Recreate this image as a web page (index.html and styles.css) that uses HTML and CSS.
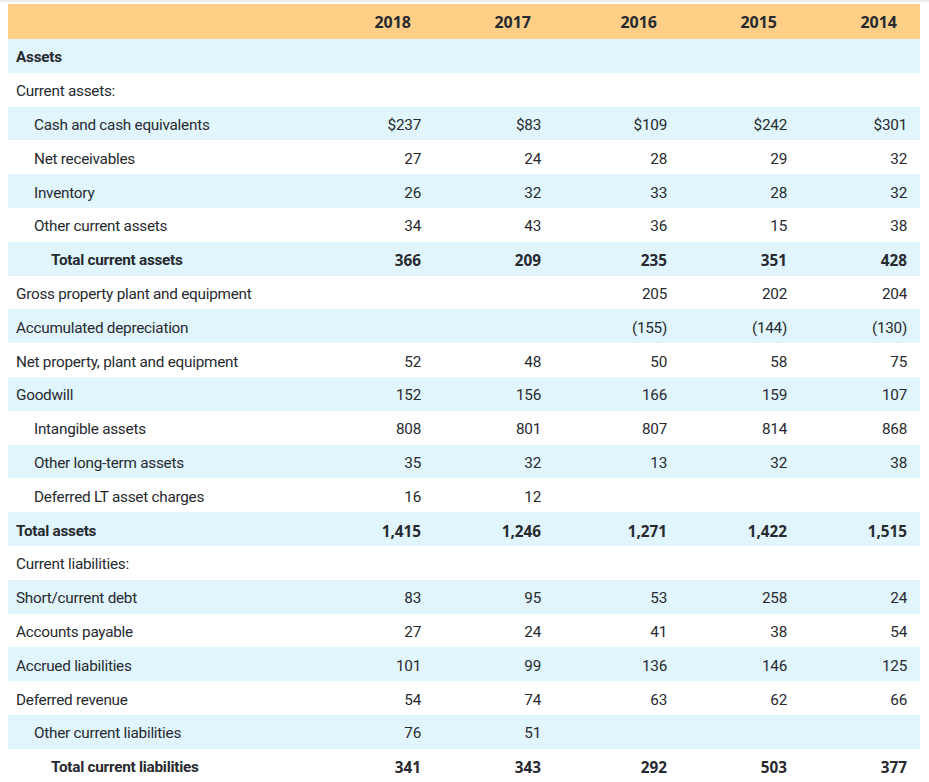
FILE: index.html
```html
<!DOCTYPE html>
<html>
<head>
<meta charset="utf-8">
<link rel="stylesheet" href="styles.css">
</head>
<body>
<table class="bs">
<colgroup>
<col class="c-lbl"><col class="c-std"><col class="c-std"><col class="c-wide"><col class="c-std"><col class="c-std">
</colgroup>
<thead>
<tr class="head"><th class="lbl"></th><th>2018</th><th>2017</th><th>2016</th><th>2015</th><th>2014</th></tr>
</thead>
<tbody>
<tr class="b"><td class="lbl bold">Assets</td><td></td><td></td><td></td><td></td><td></td></tr>
<tr><td class="lbl">Current assets:</td><td></td><td></td><td></td><td></td><td></td></tr>
<tr class="b"><td class="lbl i1">Cash and cash equivalents</td><td>$237</td><td>$83</td><td>$109</td><td>$242</td><td>$301</td></tr>
<tr><td class="lbl i1">Net receivables</td><td>27</td><td>24</td><td>28</td><td>29</td><td>32</td></tr>
<tr class="b"><td class="lbl i1">Inventory</td><td>26</td><td>32</td><td>33</td><td>28</td><td>32</td></tr>
<tr><td class="lbl i1">Other current assets</td><td>34</td><td>43</td><td>36</td><td>15</td><td>38</td></tr>
<tr class="b tot"><td class="lbl i2">Total current assets</td><td>366</td><td>209</td><td>235</td><td>351</td><td>428</td></tr>
<tr><td class="lbl">Gross property plant and equipment</td><td></td><td></td><td>205</td><td>202</td><td>204</td></tr>
<tr class="b"><td class="lbl">Accumulated depreciation</td><td></td><td></td><td>(155)</td><td>(144)</td><td>(130)</td></tr>
<tr><td class="lbl">Net property, plant and equipment</td><td>52</td><td>48</td><td>50</td><td>58</td><td>75</td></tr>
<tr class="b"><td class="lbl">Goodwill</td><td>152</td><td>156</td><td>166</td><td>159</td><td>107</td></tr>
<tr><td class="lbl i1">Intangible assets</td><td>808</td><td>801</td><td>807</td><td>814</td><td>868</td></tr>
<tr class="b"><td class="lbl i1">Other long-term assets</td><td>35</td><td>32</td><td>13</td><td>32</td><td>38</td></tr>
<tr><td class="lbl i1">Deferred LT asset charges</td><td>16</td><td>12</td><td></td><td></td><td></td></tr>
<tr class="b tot"><td class="lbl">Total assets</td><td>1,415</td><td>1,246</td><td>1,271</td><td>1,422</td><td>1,515</td></tr>
<tr><td class="lbl">Current liabilities:</td><td></td><td></td><td></td><td></td><td></td></tr>
<tr class="b"><td class="lbl">Short/current debt</td><td>83</td><td>95</td><td>53</td><td>258</td><td>24</td></tr>
<tr><td class="lbl">Accounts payable</td><td>27</td><td>24</td><td>41</td><td>38</td><td>54</td></tr>
<tr class="b"><td class="lbl">Accrued liabilities</td><td>101</td><td>99</td><td>136</td><td>146</td><td>125</td></tr>
<tr><td class="lbl">Deferred revenue</td><td>54</td><td>74</td><td>63</td><td>62</td><td>66</td></tr>
<tr class="b"><td class="lbl i1">Other current liabilities</td><td>76</td><td>51</td><td></td><td></td><td></td></tr>
<tr class="tot"><td class="lbl i2">Total current liabilities</td><td>341</td><td>343</td><td>292</td><td>503</td><td>377</td></tr>
</tbody>
</table>
</body>
</html>
```

FILE: styles.css
```css
html, body {
  margin: 0;
  background: #ffffff;
}
body {
  border-top: 2px solid #ececec;
  padding: 2px 9px 0 8px;
  font-family: Roboto, "Liberation Sans", sans-serif;
  color: #272a2f;
}
.bs {
  width: 912px;
  border-collapse: collapse;
  table-layout: fixed;
  font-size: 15.3px;
  letter-spacing: -0.25px;
}
.c-lbl { width: 306px; }
.c-std { width: 120px; }
.c-wide { width: 126px; }
.bs th, .bs td {
  padding: 3px 13px 0 8px;
  text-align: right;
  white-space: nowrap;
}
.bs th {
  font-family: "Open Sans", sans-serif;
  font-weight: 700;
  font-size: 16px;
  letter-spacing: 0;
  height: 35px;
  padding: 0 23px 0 8px;
  background: #ffcf88;
}
.bs td { height: 30.8px; }
.bs td.lbl { text-align: left; }
.i1 { padding-left: 26px !important; }
.i2 { padding-left: 43px !important; }
.b td { background: #e1f5fd; }
.bold, .tot td { font-weight: 700; }
.tot td:not(.lbl) { font-family: "Open Sans", sans-serif; letter-spacing: 0; }
```
